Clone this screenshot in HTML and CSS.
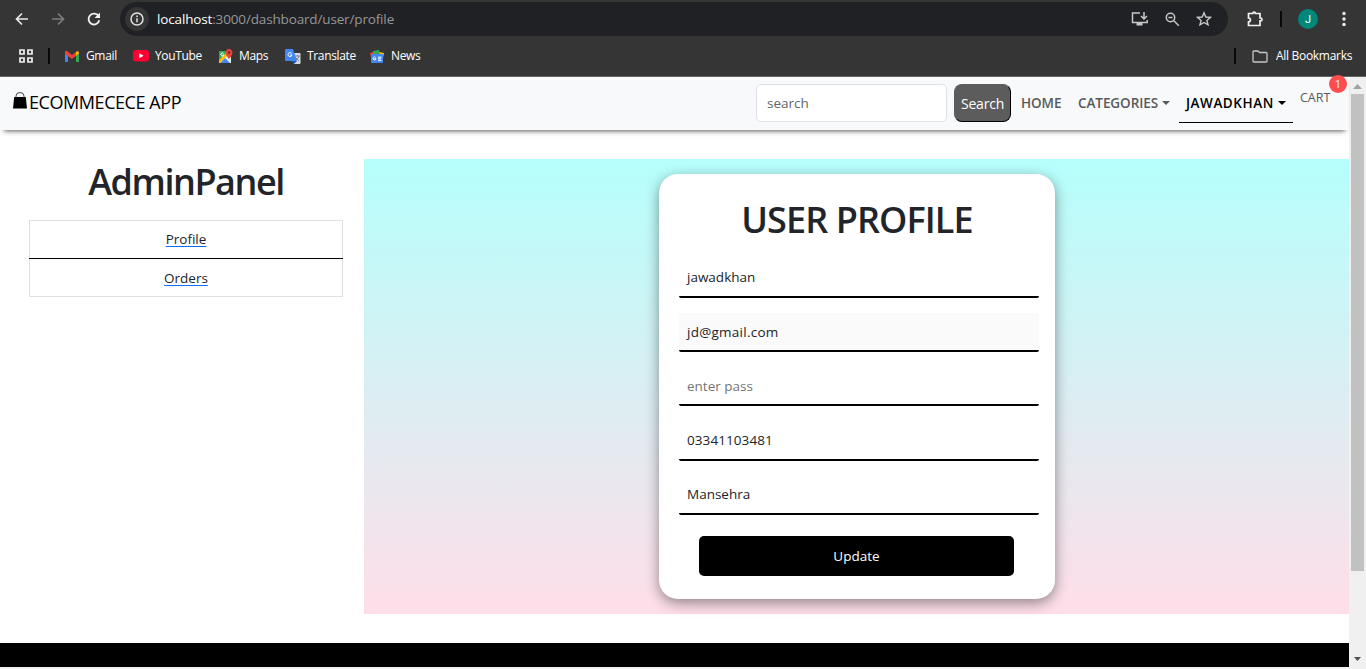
FILE: index.html
```html
<!DOCTYPE html>
<html lang="en">
<head>
<meta charset="utf-8">
<title>User Profile</title>
<link rel="stylesheet" href="styles.css">
</head>
<body>
<header class="chrome">
  <div class="toolbar">
    <svg class="back" width="14" height="14" viewBox="0 0 14 14" fill="none" stroke="#e8e8e8" stroke-width="1.7"><path d="M13 7H2M7 1.5 1.5 7 7 12.500"/></svg>
    <svg class="forward" width="14" height="14" viewBox="0 0 14 14" fill="none" stroke="#7d7d7d" stroke-width="1.7"><path d="M1 7h11M7 1.500 12.500 7 7 12.500"/></svg>
    <svg class="reload" width="14" height="14" viewBox="0 0 14 14" fill="none" stroke="#f1f1f1" stroke-width="1.800"><path d="M11.600 4.200A5.400 5.400 0 1 0 12.300 8.300"/><path d="M13 .5V6H7.500z" fill="#f1f1f1" stroke="none"/></svg>
    <div class="omnibox">
      <span class="site-info"><svg width="14" height="14" viewBox="0 0 14 14" fill="none" stroke="#e3e3e3" stroke-width="1.500"><circle cx="7" cy="7" r="6"/><path d="M7 6.200v4M7 3.500v1.500"/></svg></span>
      <span class="url"><b>localhost</b>:3000/dashboard/user/profile</span>
      <span class="omni-icons">
        <svg width="18" height="16" viewBox="0 0 18 16" fill="none" stroke="#c7c7c7" stroke-width="1.500"><path d="M9 2H1.500v9.500h14.700V9M13 1v6M10 5l3 3 3-3"/><path d="M5.500 12h6v2.500h-6z" fill="#c7c7c7" stroke="none"/></svg>
        <svg width="15" height="15" viewBox="0 0 15 15" fill="none" stroke="#c7c7c7" stroke-width="1.500"><circle cx="5.500" cy="5.500" r="4.200"/><path d="m8.800 8.800 5 5M3.500 5.500h4"/></svg>
        <svg width="16" height="16" viewBox="0 0 16 16" fill="none" stroke="#c7c7c7" stroke-width="1.400"><path d="m8 1.800 1.800 4.200 4.600.4-3.500 3 1.100 4.500L8 11.500l-4 2.400 1.100-4.500-3.500-3 4.600-.4z"/></svg>
      </span>
    </div>
    <svg class="puzzle" width="18" height="18" viewBox="0 0 18 18" fill="none" stroke="#f1f1f1" stroke-width="1.700"><path d="M2.500 3.500h4.300a1.300 1.300 0 0 1 2.600 0H14v4.500h.6a1.400 1.400 0 0 1 0 2.800H14V15.500H2.500v-3.700a1.900 1.900 0 0 0 0-3.800z"/></svg>
    <span class="bar"></span>
    <span class="avatar">J</span>
    <svg class="dots" width="4" height="16" viewBox="0 0 4 16" fill="#f1f1f1"><circle cx="2" cy="2.500" r="1.700"/><circle cx="2" cy="8" r="1.700"/><circle cx="2" cy="13.500" r="1.700"/></svg>
  </div>
  <div class="bookmarks">
    <svg class="apps" width="14" height="14" viewBox="0 0 14 14" fill="none" stroke="#f1f1f1" stroke-width="1.700"><path d="M1 1h4v4H1zM9 1h4v4H9zM1 9h4v4H1zM9 9h4v4H9z"/></svg>
    <span class="bar bar-left"></span>
    <span class="mark gmail"><svg width="14" height="11" viewBox="0 0 14 11"><path d="M0 1.500 3 3v8H0z" fill="#4285f4"/><path d="M11 3l3-1.500V11h-3z" fill="#34a853"/><path d="M0 0h2l5 4 5-4v4L7 8 0 3z" fill="#ea4335"/><path d="M11 1q3-2 3 1L11 5z" fill="#fbbc04"/></svg><span>Gmail</span></span>
    <span class="mark youtube"><svg width="16" height="12" viewBox="0 0 16 12"><rect width="16" height="11.500" rx="3" fill="#ff0033"/><path d="m6.300 3.300 4.300 2.500-4.300 2.500z" fill="#fff"/></svg><span>YouTube</span></span>
    <span class="mark maps"><svg width="15" height="15" viewBox="0 0 15 15"><path d="M1 2h12v12H1z" fill="#34a853"/><path d="m1 13 9-9 3 4v6H2z" fill="#e8eaed"/><path d="m2 14 5-5 5 5z" fill="#4285f4"/><path d="m1 11 8-8 2 2-9 9H1z" fill="#fbbc04"/><path d="M11 0a3.500 3.500 0 0 1 3.300 4.500Q14 6.500 11 10 8 6.500 7.700 4.500A3.500 3.500 0 0 1 11 0z" fill="#ea4335"/><circle cx="11" cy="3.500" r="1.200" fill="#8c1d18"/><path d="M5.500 4.300A1.600 1.600 0 1 0 6 6H4.600" fill="none" stroke="#fff"/></svg><span>Maps</span></span>
    <span class="mark translate"><svg width="16" height="15" viewBox="0 0 16 15"><path d="M5 4h9.500q1 0 1 1v9q0 1-1 1H9z" fill="#d7dadd"/><path d="M1 0h7l4 12H1q-1 0-1-1V1q0-1 1-1z" fill="#4285f4"/><path d="m7 12 2 3 3-3z" fill="#185abc"/><path d="M6.700 4.500A2 2 0 1 0 7 6H5" fill="none" stroke="#fff"/><path d="M10 7h5M12.500 6v1M14 7q-1 3-3 4M11 9l3 3" fill="none" stroke="#6b7280" stroke-width=".8"/></svg><span>Translate</span></span>
    <span class="mark news"><svg width="14" height="13" viewBox="0 0 14 13"><path d="m0 3 6-2 1 5-6 1z" fill="#ea4335"/><path d="m7 1.500 7 1.500-1 5-7-1z" fill="#fbbc04"/><path d="m3 1 6-1 1 5H3z" fill="#34a853"/><rect x="1" y="4" width="12" height="9" rx="1" fill="#4285f4"/><path d="M5.500 7.300A1.500 1.500 0 1 0 6 8.700H4.600M8 7.200h3.500M8 8.800h3M8 10.400h3.500" fill="none" stroke="#fff"/></svg><span>News</span></span>
    <span class="grow"></span>
    <span class="bar bar-right"></span>
    <span class="mark all"><svg width="16" height="13" viewBox="0 0 16 13" fill="none" stroke="#c7c7c7" stroke-width="1.300"><path d="M1 2q0-1 1-1h4l1.500 1.500H14q1 0 1 1V11q0 1-1 1H2q-1 0-1-1z"/></svg><span>All Bookmarks</span></span>
  </div>
</header>
<div class="viewport">
  <div class="page">
    <nav class="navbar">
      <a class="brand"><svg width="14" height="17" viewBox="0 0 14 17"><path d="M1.200 5h11.600L14 16.500H0z"/><path d="M3 6V4a4 3.500 0 0 1 8 0v2" fill="none" stroke="#333" stroke-width=".9"/></svg><span>ECOMMECECE APP</span></a>
      <div class="search-box">search</div>
      <button class="search-btn"><span>Search</span></button>
      <a class="link home">HOME</a>
      <a class="link categories"><span>CATEGORIES</span><i class="caret"></i></a>
      <a class="link active"><span>JAWADKHAN</span><i class="caret"></i></a>
      <a class="cart">CART<span class="badge">1</span></a>
    </nav>
    <main class="content">
      <aside class="side">
        <h1 class="side-title">AdminPanel</h1>
        <ul class="menu"><li><a>Profile</a></li><li><a>Orders</a></li></ul>
      </aside>
      <section class="panel">
        <form class="card">
          <h1 class="card-title">USER PROFILE</h1>
          <div class="field name">jawadkhan</div>
          <div class="field email">jd@gmail.com</div>
          <div class="field pass">enter pass</div>
          <div class="field phone">03341103481</div>
          <div class="field city">Mansehra</div>
          <button type="button" class="update">Update</button>
        </form>
      </section>
    </main>
    <footer class="footer"></footer>
  </div>
  <div class="scrollbar">
    <svg width="9" height="5" viewBox="0 0 9 5"><path d="M4.500 0 9 5H0z" fill="#a3a3a3"/></svg>
    <div class="thumb"></div>
    <svg width="7" height="4" viewBox="0 0 7 4"><path d="M0 0h7L3.500 4z" fill="#505050"/></svg>
  </div>
</div>
</body>
</html>
```

FILE: styles.css
```css
* { box-sizing: border-box; }
body { margin: 0; width: 1366px; height: 669px; overflow: hidden; background: #f0f0f0; color: #212529; font-family: "Open Sans", "Noto Sans", sans-serif; font-size: 13.500px; }
button { font: inherit; padding: 0; }
span, a, div { white-space: nowrap; }
svg { display: block; flex: none; }

.chrome { height: 77px; background: #353535; border-bottom: 1px solid #656565; color: #fff; }
.toolbar { display: flex; align-items: center; height: 38px; padding: 0 20px 0 15px; }
.forward { margin-left: 22px; }
.reload { margin-left: 22px; }
.omnibox { display: flex; align-items: center; width: 1108px; height: 34px; margin-left: 19px; padding: 0 16px 0 5px; border-radius: 17px; background: #202124; }
.site-info { display: grid; place-items: center; width: 24px; height: 24px; border-radius: 50%; background: #353535; }
.url { margin-left: 8px; color: #969799; font-size: 13.500px; letter-spacing: -0.150px; }
.url b { color: #fff; font-weight: 400; }
.omni-icons { display: flex; align-items: center; gap: 16px; margin-left: auto; }
.puzzle { margin-left: 18px; }
.bar { width: 2px; height: 16px; background: #080808; }
.toolbar .bar { margin-left: 16px; }
.avatar { display: grid; place-items: center; width: 20px; height: 20px; margin-left: 16px; border-radius: 50%; background: #00897b; font-family: Roboto, sans-serif; font-size: 11px; }
.dots { margin-left: 24px; }
.bookmarks { display: flex; align-items: center; height: 36px; padding: 0 14px 0 19px; }
.bar-left { margin-left: 15px; }
.mark { display: flex; align-items: center; font-size: 12px; }
.mark span { letter-spacing: -0.350px; line-height: 16px; padding-bottom: 1px; }
.gmail { width: 68px; margin-left: 15px; gap: 7px; }
.youtube { width: 85px; gap: 6px; }
.maps { width: 67px; gap: 6px; }
.translate { width: 85px; gap: 6px; }
.news { gap: 7px; }
.grow { flex: 1; }
.all { width: 100px; margin-left: 16px; gap: 8px; }
.all span { letter-spacing: -0.300px; }

.viewport { display: flex; height: 590px; }
.page { display: flex; flex-direction: column; width: 1349px; background: #fff; }
.navbar { display: flex; position: relative; height: 53px; padding: 7px 18px 0 13px; background: #f8f9fa; box-shadow: 0 5px 5px -4px rgba(0,0,0,.65); }
.brand { display: flex; align-items: flex-start; width: 743px; height: 38px; padding-top: 8px; color: #000; font-size: 18px; }
.brand span { margin: -2px 0 0 2px; line-height: 24px; letter-spacing: -0.430px; }
.search-box { width: 191px; height: 38px; padding: 0 10px; border: 1px solid #dee2e6; border-radius: 5px; background: #fff; color: #60666c; line-height: 37px; }
.search-btn { width: 57px; height: 38px; margin-left: 7px; border: 1px solid #5c5c5c; border-right-color: #000; border-bottom-color: #000; border-radius: 8px; background: #5c5c5c; color: #fff; font-size: 14px; letter-spacing: -0.200px; }
.link { display: flex; align-items: center; height: 39px; padding-bottom: 1px; color: #595a5b; font-weight: 600; letter-spacing: -0.080px; }
.home { margin-left: 10px; width: 57px; }
.categories { width: 101px; letter-spacing: -0.070px; }
.caret { width: 0; margin-left: 4px; border: 4px solid transparent; border-top-color: currentColor; border-bottom: 0; }
.active { width: 114px; padding: 0 0 0 7px; border-bottom: 1px solid #000; color: #000; letter-spacing: 0.550px; }
.cart { position: relative; margin-left: 7px; padding-top: 4px; height: 38px; color: #595a5b; font-size: 12.500px; line-height: 19px; }
.badge { position: absolute; left: 29px; top: -9px; width: 18px; height: 18px; border-radius: 50%; background: #ff4d4f; color: #fff; font-size: 11px; line-height: 18px; text-align: center; }

.content { display: flex; height: 513px; padding-top: 29px; }
.side { width: 364px; padding: 0 21px 0 29px; text-align: center; }
.side-title, .card-title { margin: 0; font-size: 36px; font-weight: 600; line-height: 44px; }
.side-title { height: 61px; padding-top: 1px; letter-spacing: -1.450px; }
.menu { height: 77px; margin: 0; padding: 0; list-style: none; border: 1px solid #dee2e6; }
.menu li { height: 37px; line-height: 36px; }
.menu li + li { height: 38px; margin: 0 -1px; border-top: 1px solid #000; line-height: 38px; }
.menu a { text-decoration: underline; text-decoration-color: #0d6efd; text-underline-offset: 2px; }
.panel { width: 985px; height: 455px; padding: 15px 0 0 295px; background: linear-gradient(0deg, #ffdee9 0%, #b5fffc 100%); }
.card { width: 396px; height: 425px; padding: 24px 16px 0 20px; border-radius: 19px; background: #fff; box-shadow: 0 4px 14px rgba(0,0,0,.42); }
.card-title { height: 60.750px; text-align: center; padding-right: 4px; letter-spacing: -0.900px; }
.field { height: 39px; margin-bottom: 15.250px; padding-left: 8px; border-bottom: 2px solid #000; border-radius: 2px; line-height: 37px; }
.email { background: #fafafa; line-height: 38px; letter-spacing: 0.250px; }
.pass { color: #757575; line-height: 38px; }
.phone { letter-spacing: 0.080px; }
.update { display: block; width: 315px; height: 40px; margin: 21px 0 0 20px; border: 0; border-radius: 5px; background: #000; color: #fff; }
.footer { height: 24px; background: #000; }
.scrollbar { display: flex; flex-direction: column; align-items: center; width: 17px; padding: 7px 0 6px; background: #f0f0f0; }
.thumb { width: 13px; height: 477px; margin: 5px 0 auto; background: #c1c1c1; }
```
